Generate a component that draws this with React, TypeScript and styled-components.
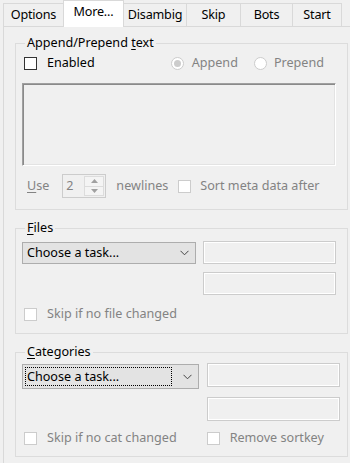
import React from 'react';
import styled, { createGlobalStyle, css } from 'styled-components';

const GlobalStyle = createGlobalStyle`
  html, body {
    margin: 0;
    padding: 0;
    background: #f0f0f0;
  }
  body {
    font-family: "Noto Sans", "Segoe UI", sans-serif;
    font-size: 12.6px;
    color: #000;
  }
`;

const DISABLED = '#838383';

const Window = styled.div`
  width: 350px;
  height: 463px;
  overflow: hidden;
  background: #f0f0f0;
  padding-left: 3px;
  box-sizing: border-box;
`;

const TabStrip = styled.div`
  display: flex;
  align-items: flex-end;
  height: 26px;
  position: relative;
  z-index: 1;
`;

const Tab = styled.div<{ $width: number; $active?: boolean }>`
  box-sizing: border-box;
  width: ${p => p.$width}px;
  height: 23px;
  padding-top: 3px;
  line-height: 16px;
  text-align: center;
  white-space: nowrap;
  letter-spacing: -0.2px;
  border: 1px solid #d9d9d9;
  border-bottom: none;
  margin-left: -1px;
  background: #f0f0f0;
  &:first-child {
    margin-left: 0;
  }
  ${p =>
    p.$active &&
    css`
      height: 27px;
      margin-bottom: -1px;
      background: #fff;
      padding-top: 3px;
    `}
`;

const Panel = styled.div`
  box-sizing: border-box;
  width: 360px;
  height: 450px;
  border: 1px solid #d9d9d9;
  padding: 9px 0 0 11px;
  display: flex;
  flex-direction: column;
  gap: 11px;
`;

const Group = styled.fieldset<{ $padBottom: number }>`
  box-sizing: border-box;
  width: 333px;
  margin: 0;
  padding: 0 0 ${p => p.$padBottom}px 6px;
  border: 1px solid #dcdcdc;
  min-width: 0;
`;

const Legend = styled.legend`
  margin-left: 3px;
  padding: 0 2px;
  line-height: 14px;
  height: 14px;
`;

const Key = styled.span`
  text-decoration: underline;
  text-underline-offset: 2px;
`;

const Row = styled.div<{ $top: number; $height?: number }>`
  display: flex;
  align-items: center;
  height: ${p => p.$height ?? 16}px;
  margin-top: ${p => p.$top}px;
`;

const Label = styled.span<{ $disabled?: boolean; $left?: number }>`
  color: ${p => (p.$disabled ? DISABLED : '#000')};
  margin-left: ${p => p.$left ?? 0}px;
  white-space: nowrap;
  line-height: 16px;
`;

const CheckBox = styled.span<{ $disabled?: boolean; $left?: number }>`
  box-sizing: border-box;
  flex: none;
  width: 13px;
  height: 13px;
  margin-left: ${p => p.$left ?? 0}px;
  background: #fff;
  border: 1px solid ${p => (p.$disabled ? '#cccccc' : '#333333')};
`;

const Radio = styled.span<{ $checked?: boolean; $left?: number }>`
  box-sizing: border-box;
  flex: none;
  width: 13px;
  height: 13px;
  margin-left: ${p => p.$left ?? 0}px;
  border-radius: 50%;
  border: 1px solid #cccccc;
  background: #fff;
  display: flex;
  align-items: center;
  justify-content: center;
  &::after {
    content: '';
    width: 7px;
    height: 7px;
    border-radius: 50%;
    background: ${p => (p.$checked ? '#cccccc' : 'transparent')};
  }
`;

const TextArea = styled.div`
  box-sizing: border-box;
  width: 314px;
  height: 83px;
  margin-top: 12px;
  background: #f0f0f0;
  border-style: solid;
  border-width: 1px;
  border-color: #a0a0a0 #ffffff #ffffff #a0a0a0;
  box-shadow: inset 1px 1px 0 #8a8a8a, inset -1px -1px 0 #e3e3e3;
`;

const Spin = styled.div`
  box-sizing: border-box;
  width: 44px;
  height: 24px;
  margin-left: 13px;
  border: 1px solid #cccccc;
  display: flex;
  align-items: stretch;
`;

const SpinValue = styled.span`
  flex: 1;
  color: ${DISABLED};
  padding-left: 3px;
  line-height: 21px;
`;

const SpinButtons = styled.div`
  width: 18px;
  display: flex;
  flex-direction: column;
  margin: 1px 1px 1px 0;
  border: 1px solid #dcdcdc;
`;

const SpinButton = styled.div<{ $down?: boolean }>`
  flex: 1;
  display: flex;
  align-items: center;
  justify-content: center;
  background: #f4f4f4;
  ${p => p.$down && 'border-top: 1px solid #dcdcdc;'}
`;

const TaskGrid = styled.div<{ $top: number; $comboWidth: number; $gap: number }>`
  display: grid;
  grid-template-columns: ${p => p.$comboWidth}px 133px;
  column-gap: ${p => p.$gap}px;
  row-gap: 8px;
  margin-top: ${p => p.$top}px;
  align-items: start;
`;

const Combo = styled.div<{ $height: number }>`
  box-sizing: border-box;
  height: ${p => p.$height}px;
  margin-top: 1px;
  border: 1px solid #adadad;
  background: #e3e3e3;
  display: flex;
  align-items: center;
  padding: 0 6px 0 3px;
`;

const ComboText = styled.span<{ $focused?: boolean }>`
  flex: 1;
  line-height: 16px;
  padding: 0 1px;
  white-space: nowrap;
  ${p =>
    p.$focused &&
    css`
      outline: 1px dotted #000;
      outline-offset: 0;
      padding: 1px 1px 0;
      margin-right: 12px;
    `}
`;

const TextBox = styled.div<{ $height: number }>`
  box-sizing: border-box;
  height: ${p => p.$height}px;
  border: 1px solid #cccccc;
  box-shadow: inset 0 0 0 1px #ffffff;
  background: #f0f0f0;
  grid-column: 2;
`;

const Chevron = () => (
  <svg width="9" height="6" viewBox="0 0 9 6">
    <polyline points="0.5,0.8 4.5,4.8 8.5,0.8" fill="none" stroke="#444" strokeWidth="1" />
  </svg>
);

const Arrow = ({ down }: { down?: boolean }) => (
  <svg width="7" height="4" viewBox="0 0 7 4">
    <polygon points={down ? '0,0 7,0 3.5,4' : '0,4 7,4 3.5,0'} fill="#a0a0a0" />
  </svg>
);

const tabs: [string, number][] = [
  ['Options', 61],
  ['More...', 61],
  ['Disambig', 64],
  ['Skip', 55],
  ['Bots', 53],
  ['Start', 50],
];

export default function App() {
  return (
    <>
      <GlobalStyle />
      <Window>
        <TabStrip>
          {tabs.map(([name, w]) => (
            <Tab key={name} $width={w} $active={name === 'More...'}>
              {name}
            </Tab>
          ))}
        </TabStrip>
        <Panel>
          <Group $padBottom={11}>
            <Legend>
              Append/Prepend <Key>t</Key>ext
            </Legend>
            <Row $top={5}>
              <CheckBox $left={2} />
              <Label $left={10}>Enabled</Label>
              <Radio $checked $left={76} />
              <Label $disabled $left={8}>
                Append
              </Label>
              <Radio $left={16} />
              <Label $disabled $left={7}>
                Prepend
              </Label>
            </Row>
            <TextArea />
            <Row $top={8} $height={24}>
              <Label $disabled $left={5}>
                <Key>U</Key>se
              </Label>
              <Spin>
                <SpinValue>2</SpinValue>
                <SpinButtons>
                  <SpinButton>
                    <Arrow />
                  </SpinButton>
                  <SpinButton $down>
                    <Arrow down />
                  </SpinButton>
                </SpinButtons>
              </Spin>
              <Label $disabled $left={10}>
                newlines
              </Label>
              <CheckBox $disabled $left={10} />
              <Label $disabled $left={9}>
                Sort meta data after
              </Label>
            </Row>
          </Group>

          <Group $padBottom={11}>
            <Legend>
              <Key>F</Key>iles
            </Legend>
            <TaskGrid $top={6} $comboWidth={174} $gap={7}>
              <Combo $height={22}>
                <ComboText>Choose a task...</ComboText>
                <Chevron />
              </Combo>
              <TextBox $height={23} />
              <TextBox $height={23} />
            </TaskGrid>
            <Row $top={11}>
              <CheckBox $disabled $left={2} />
              <Label $disabled $left={10}>
                Skip if no file changed
              </Label>
            </Row>
          </Group>

          <Group $padBottom={10}>
            <Legend>
              <Key>C</Key>ategories
            </Legend>
            <TaskGrid $top={4} $comboWidth={177} $gap={8}>
              <Combo $height={25}>
                <ComboText $focused>Choose a task...</ComboText>
                <Chevron />
              </Combo>
              <TextBox $height={24} />
              <TextBox $height={24} />
            </TaskGrid>
            <Row $top={9}>
              <CheckBox $disabled $left={2} />
              <Label $disabled $left={10}>
                Skip if no cat changed
              </Label>
              <CheckBox $disabled $left={30} />
              <Label $disabled $left={10}>
                Remove sortkey
              </Label>
            </Row>
          </Group>
        </Panel>
      </Window>
    </>
  );
}
